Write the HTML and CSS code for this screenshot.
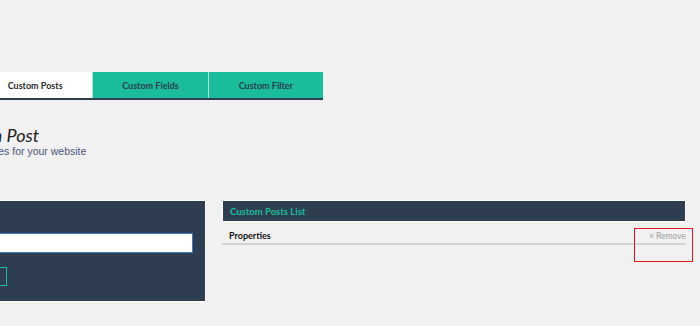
FILE: index.html
```html
<!DOCTYPE html>
<html lang="en">
<head>
  <meta charset="UTF-8" />
  <meta name="viewport" content="width=device-width, initial-scale=1.0" />
  <title>Custom Posts</title>
  <link rel="stylesheet" href="styles.css">
</head>
<body>
  <div class="page">

    <!-- Tabs -->
    <nav class="tabs">
      <a class="tab active" href="#posts">Custom Posts</a>
      <a class="tab" href="#fields">Custom Fields</a>
      <a class="tab" href="#filter">Custom Filter</a>
    </nav>

    <!-- Heading -->
    <header class="intro">
      <h1>Add Design Post</h1>
      <p>Create post types for your website</p>
    </header>

    <div class="columns">
      <!-- New post type form -->
      <section class="panel">
        <form class="post-form">
          <label for="postName">Name</label>
          <input type="text" id="postName" />
          <button type="submit">Add Post Type</button>
        </form>
      </section>

      <!-- List of post types -->
      <section class="list">
        <h2 class="list-head">Custom Posts List</h2>
        <div class="list-row">
          <span class="row-name">Properties</span>
          <a class="row-remove" href="#">&times; Remove</a>
          <span class="highlight"></span>
        </div>
      </section>
    </div>

  </div>
</body>
</html>
```

FILE: styles.css
```css
body {
  margin: 0;
  background-color: #f1f1f1;
  font-family: Lato, "Open Sans", sans-serif;
  overflow: hidden;
}
.page {
  margin-left: -22px;
  padding-top: 72px;
}
.tabs {
  display: flex;
  width: 345px;
  border-bottom: 2px solid #2c3e50;
}
.tab {
  width: 115px;
  height: 26px;
  line-height: 28px;
  text-align: center;
  text-decoration: none;
  font-size: 9px;
  font-weight: bold;
  color: #2c3e50;
  background-color: #1abc9c;
  border-left: 1px solid #a8e6d7;
}
.tab.active {
  background-color: #fff;
  border-left: none;
  color: #2a2a2a;
}
.intro {
  margin: 24px 0 0;
}
.intro h1 {
  margin: 0 0 0 -61px;
  font-size: 18px;
  font-style: italic;
  font-weight: normal;
  color: #222;
  line-height: 22px;
}
.intro p {
  margin: -1px 0 0 -51px;
  font-family: "Liberation Sans", Arial, sans-serif;
  font-size: 10.5px;
  color: #50577a;
}
.columns {
  display: flex;
  gap: 16px;
  margin-top: 43px;
}
.panel {
  width: 228px;
  height: 102px;
  background-color: #2e3e50;
  border: 1px solid #fff;
  box-sizing: border-box;
  padding: 32px 12px 0 0;
}
.post-form label {
  display: none;
}
.post-form input {
  display: block;
  width: 100%;
  height: 20px;
  box-sizing: border-box;
  margin: 0 0 14px 0;
  border: 1px solid #3f7fc0;
  background: #fff;
}
.post-form button {
  display: block;
  width: 28px;
  height: 19px;
  border: 1px solid #1abc9c;
  background: transparent;
  color: transparent;
  font-size: 1px;
  padding: 0;
  cursor: pointer;
}
.list {
  width: 464px;
}
.list-head {
  margin: 0;
  height: 22px;
  line-height: 21px;
  padding-left: 7px;
  box-sizing: border-box;
  background-color: #2e3e50;
  border: 1px solid #fff;
  color: #1abc9c;
  font-size: 9.5px;
  font-weight: bold;
}
.list-row {
  position: relative;
  display: flex;
  justify-content: space-between;
  align-items: center;
  margin-top: 8px;
  padding: 0 0 2px 7px;
  border-bottom: 2px solid #d4d4d4;
  font-size: 9px;
}
.row-name {
  font-weight: bold;
  color: #111;
}
.row-remove {
  color: #a0a0a0;
  text-decoration: none;
  font-size: 8.5px;
}
.highlight {
  position: absolute;
  right: -7px;
  top: -2px;
  width: 57px;
  height: 32px;
  border: 1px solid #e0161c;
}
```
